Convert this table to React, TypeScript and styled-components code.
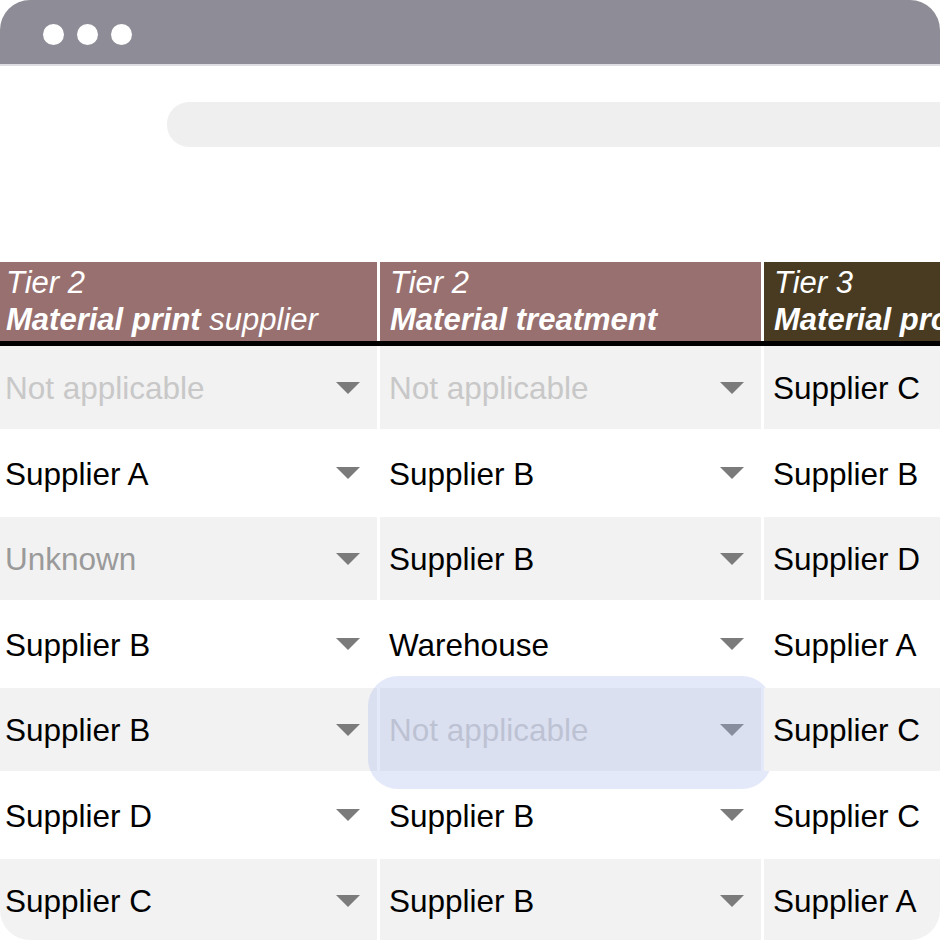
import React from 'react';
import styled, { createGlobalStyle } from 'styled-components';

type Tone = 'normal' | 'muted' | 'faint';

type CellData = {
  label: string;
  tone?: Tone;
  focused?: boolean;
};

type Column = {
  tier: string;
  strong: string;
  rest?: string;
  color: string;
};

const columns: Column[] = [
  { tier: 'Tier 2', strong: 'Material print', rest: 'supplier', color: '#98706f' },
  { tier: 'Tier 2', strong: 'Material treatment', color: '#98706f' },
  { tier: 'Tier 3', strong: 'Material processing', color: '#483b21' },
];

const rows: CellData[][] = [
  [{ label: 'Not applicable', tone: 'faint' }, { label: 'Not applicable', tone: 'faint' }, { label: 'Supplier C' }],
  [{ label: 'Supplier A' }, { label: 'Supplier B' }, { label: 'Supplier B' }],
  [{ label: 'Unknown', tone: 'muted' }, { label: 'Supplier B' }, { label: 'Supplier D' }],
  [{ label: 'Supplier B' }, { label: 'Warehouse' }, { label: 'Supplier A' }],
  [{ label: 'Supplier B' }, { label: 'Not applicable', tone: 'faint', focused: true }, { label: 'Supplier C' }],
  [{ label: 'Supplier D' }, { label: 'Supplier B' }, { label: 'Supplier C' }],
  [{ label: 'Supplier C' }, { label: 'Supplier B' }, { label: 'Supplier A' }],
];

const toneColor: Record<Tone, string> = {
  normal: '#000000',
  muted: '#9a9a9a',
  faint: '#c8c8c8',
};

const Caret = () => (
  <CaretIcon width='24' height='12' viewBox='0 0 24 12'>
    <path d='M0 0 L24 0 L12 12 Z' fill='currentColor' />
  </CaretIcon>
);

const App: React.FC = () => (
  <>
    <GlobalStyle />
    <Window>
      <TitleBar>
        <Dot />
        <Dot />
        <Dot />
      </TitleBar>
      <SearchBar />
      <Sheet>
        <HeaderRow>
          {columns.map((col, i) => (
            <HeaderCell key={i} $bg={col.color}>
              <span>{col.tier}</span>
              <span>
                <strong>{col.strong}</strong>
                {col.rest && ` ${col.rest}`}
              </span>
            </HeaderCell>
          ))}
        </HeaderRow>
        {rows.map((row, r) => (
          <Row key={r} $shaded={r % 2 === 0}>
            {row.map((cell, c) => (
              <Cell key={c} $shaded={r % 2 === 0}>
                <CellText $tone={cell.tone || 'normal'}>{cell.label}</CellText>
                <Caret />
                {cell.focused && <Focus />}
              </Cell>
            ))}
          </Row>
        ))}
      </Sheet>
    </Window>
  </>
);

export default App;

const GlobalStyle = createGlobalStyle`
  html, body {
    margin: 0;
    padding: 0;
    background: #ffffff;
  }
  body {
    font-family: 'Liberation Sans', Arial, sans-serif;
  }
`;

const Window = styled.div`
  width: 940px;
  height: 940px;
  border-radius: 30px;
  overflow: hidden;
  background: #ffffff;
  display: flex;
  flex-direction: column;
`;

const TitleBar = styled.div`
  flex: none;
  height: 66px;
  box-sizing: border-box;
  background: #8e8d97;
  border-bottom: 2px solid #dedde3;
  display: flex;
  align-items: center;
  gap: 13px;
  padding: 4px 0 0 43px;
`;

const Dot = styled.span`
  width: 21px;
  height: 21px;
  border-radius: 50%;
  background: #ffffff;
`;

const SearchBar = styled.div`
  flex: none;
  height: 45px;
  margin: 36px 0 0 167px;
  width: 820px;
  border-radius: 22px;
  background: #efefef;
`;

const Sheet = styled.div`
  margin: 115px 0 0 -4px;
  display: flex;
  flex-direction: column;
`;

const HeaderRow = styled.div`
  display: grid;
  grid-template-columns: repeat(3, 381px);
  column-gap: 3px;
  height: 84px;
  box-sizing: border-box;
  border-bottom: 5px solid #000000;
`;

const HeaderCell = styled.div<{ $bg: string }>`
  background: ${(p) => p.$bg};
  color: #ffffff;
  font-style: italic;
  font-size: 31px;
  line-height: 37px;
  padding: 2px 0 0 10px;
  display: flex;
  flex-direction: column;
  white-space: nowrap;
  overflow: hidden;
  strong {
    font-weight: 700;
  }
`;

const Row = styled.div<{ $shaded: boolean }>`
  display: grid;
  grid-template-columns: repeat(3, 381px);
  column-gap: 3px;
  height: ${(p) => (p.$shaded ? 83 : 88)}px;
`;

const Cell = styled.div<{ $shaded: boolean }>`
  position: relative;
  background: ${(p) => (p.$shaded ? '#f2f2f2' : 'transparent')};
  display: flex;
  align-items: center;
  justify-content: space-between;
  padding: 2px 17px 0 9px;
`;

const CellText = styled.span<{ $tone: Tone }>`
  color: ${(p) => toneColor[p.$tone]};
  font-size: 31.5px;
  white-space: nowrap;
`;

const CaretIcon = styled.svg`
  flex: none;
  color: #7b7b7b;
  margin-top: -2px;
`;

const Focus = styled.div`
  position: absolute;
  top: -12px;
  bottom: -18px;
  left: -12px;
  right: -11px;
  border-radius: 30px;
  background: rgba(165, 182, 240, 0.3);
`;
